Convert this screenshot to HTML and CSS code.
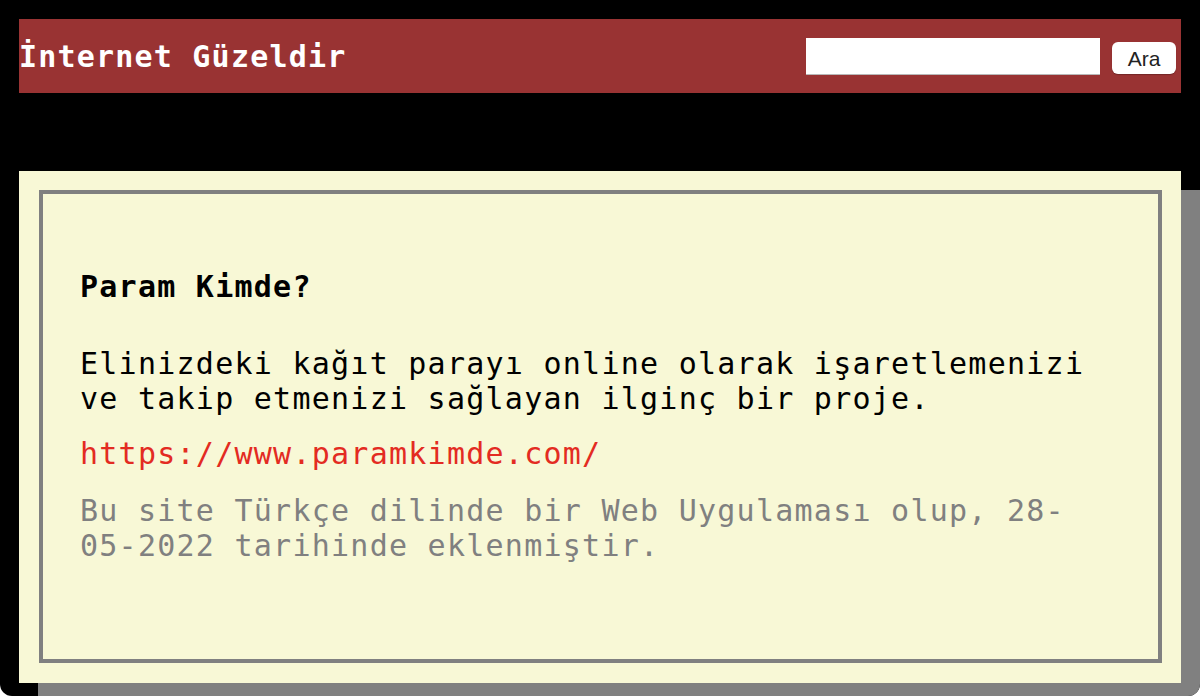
FILE: index.html
```html
<!DOCTYPE html>
<html lang="tr">
<head>
<meta charset="utf-8">
<title>İnternet Güzeldir</title>
<link rel="stylesheet" href="styles.css">
</head>
<body>
<div class="page">
  <header class="topbar">
    <h1 class="brand">İnternet Güzeldir</h1>
    <form class="search">
      <input class="search-input" type="text" aria-label="Ara">
      <button class="search-btn" type="button">Ara</button>
    </form>
  </header>
  <main class="card">
    <article class="entry">
      <h2 class="entry-title">Param Kimde?</h2>
      <p class="entry-text">Elinizdeki kağıt parayı online olarak işaretlemenizi ve takip etmenizi sağlayan ilginç bir proje.</p>
      <p class="entry-link"><a href="#">https://www.paramkimde.com/</a></p>
      <p class="entry-meta">Bu site Türkçe dilinde bir Web Uygulaması olup, 28-<wbr>05-2022 tarihinde eklenmiştir.</p>
    </article>
  </main>
</div>
</body>
</html>
```

FILE: styles.css
```css
html {
  background: #fff;
}
body {
  margin: 0;
  height: 100vh;
  background: #000;
  overflow: hidden;
  border-radius: 0 0 12px 12px;
  font-family: "DejaVu Sans Mono", monospace;
}
.page {
  padding: 19px;
}
.topbar {
  height: 74px;
  background: #993333;
  display: flex;
  align-items: center;
  justify-content: space-between;
  padding-right: 5px;
}
.brand {
  margin: 0;
  color: #fff;
  font-size: 30px;
  font-weight: bold;
  letter-spacing: 1.2px;
  line-height: 35px;
}
.search {
  display: flex;
  align-items: center;
  gap: 12px;
  margin-top: 1px;
}
.search-input {
  width: 294px;
  height: 37px;
  box-sizing: border-box;
  border: 0;
  border-bottom: 1px solid #b8b8b8;
  background: #fff;
  margin: 0;
  padding: 0 6px;
}
.search-btn {
  width: 64px;
  height: 32px;
  margin: 2px 0 0;
  border: 0;
  border-radius: 6px;
  background: #fff;
  color: #222;
  font-family: "Liberation Sans", Arial, sans-serif;
  font-size: 21px;
  padding: 2px 0 0;
  box-shadow: 0 1px 1px rgba(0,0,0,0.25);
}
.card {
  display: block;
  margin-top: 78px;
  background: #f8f8d6;
  padding: 19px 19px 20px 20px;
  box-shadow: 19px 19px 0 #808080;
}
.entry {
  border: 4px solid #808080;
  padding: 40px 37px 96px;
  font-size: 30px;
  letter-spacing: 1.25px;
  line-height: 35px;
  color: #000;
}
.entry-title {
  margin: 35px 0 42px;
  font-size: 30px;
  font-weight: bold;
  line-height: 35px;
}
.entry-text {
  margin: 0 0 20px;
}
.entry-link {
  margin: 0 0 22px;
}
.entry-link a {
  color: #e32b22;
  text-decoration: none;
}
.entry-meta {
  margin: 0;
  color: #808080;
}
```
